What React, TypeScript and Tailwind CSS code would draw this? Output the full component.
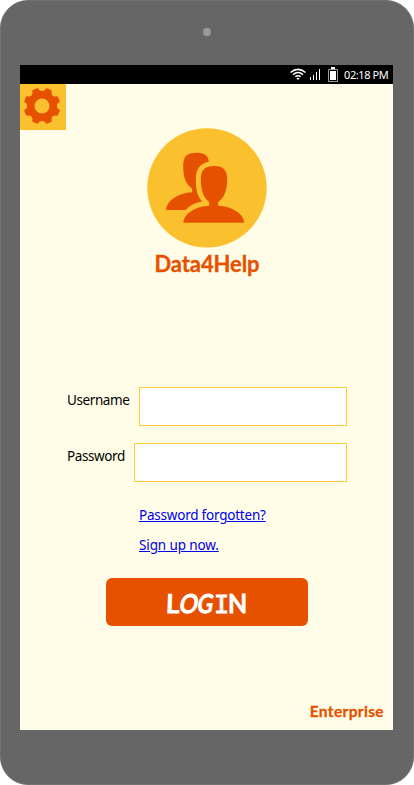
import React from "react";

const UI_FONT = "font-['Noto_Sans','Open_Sans',sans-serif]";

function StatusBar() {
  return (
    <div className="flex h-[19px] shrink-0 items-center bg-black pr-[4px]">
      <svg className="ml-auto h-[19px] w-[50px]" viewBox="0 0 50 19" fill="none" stroke="#fff">
        <path d="M1.500 7.500Q9 1.200 16.500 7.500M4 9.600Q9 5.500 14 9.600M6.300 11.700Q9 9.700 11.700 11.700" strokeWidth="1.5" />
        <path d="M7.300 13.300Q9 12 10.700 13.300L9 15Z" fill="#fff" stroke="none" />
        <path d="M21.500 12v3M24.500 10v5M27.500 7v8M30.500 4v11" strokeWidth="1" />
        <path d="M39.500 4.500h9v12h-9z" stroke="#a0a0a0" strokeWidth="1" />
        <path d="M42 2h4v2h-4zM41 6h6v9h-6z" fill="#fff" stroke="none" />
      </svg>
      <span className={`${UI_FONT} ml-[5px] w-[45px] whitespace-nowrap text-[11px] leading-[19px] tracking-[-0.4px] text-white`}>
        02:18 PM
      </span>
    </div>
  );
}

function SettingsButton() {
  return (
    <button aria-label="Settings" className="block size-[46px] bg-[#fbc02d]">
      <svg className="size-[46px]" viewBox="-22 -22 46 46">
        <circle r="18.3" fill="#e65100" />
        <g fill="#fbc02d">
          <circle r="7.5" />
          <circle cx="0" cy="-19" r="4" />
          <circle cx="0" cy="19" r="4" />
          <circle cx="-19" cy="0" r="4" />
          <circle cx="19" cy="0" r="4" />
          <circle cx="-13.5" cy="-13.5" r="4" />
          <circle cx="13.5" cy="-13.5" r="4" />
          <circle cx="-13.5" cy="13.5" r="4" />
          <circle cx="13.5" cy="13.5" r="4" />
        </g>
      </svg>
    </button>
  );
}

function Logo() {
  return (
    <svg className="h-[120px] w-[120px]" viewBox="22 24 360 360">
      <circle cx="202" cy="203.500" r="179" fill="#fbc02d" />
      <g fill="#e65100" transform="translate(1.5 0)">
        <path d="M168 98C192 98 204 105 206 125C180 130 167 145 167 180C167 210 172 230 186 244C165 249 148 257 136 270H78C78 245 112 219 156 217V206C138 193 129 175 129 138C129 109 140 98 168 98Z" />
        <path d="M222 138C250 138 261 150 261 178C261 215 250 235 234 246V257C278 259 312 283 312 308H130C130 283 163 259 207 257V246C192 235 182 215 182 178C182 150 194 138 222 138Z" />
      </g>
    </svg>
  );
}

function Field({ label, id, gap, type }: { label: string; id: string; gap: string; type: string }) {
  return (
    <div className="flex h-[39px] w-[280px]">
      <label htmlFor={id} className={`${gap} shrink-0 whitespace-nowrap pt-[3px] leading-5 tracking-[-0.4px]`}>
        {label}
      </label>
      <input id={id} type={type} className="h-[39px] min-w-0 flex-1 border border-[#ffcc33] bg-white px-2 outline-none" />
    </div>
  );
}

export default function App() {
  return (
    <div className="h-[785px] w-[414px] bg-white">
      <div className="flex h-[785px] w-[414px] flex-col rounded-[28px] border border-[#727272] bg-[#666] pl-[19px] pr-[20px]">
        <div className="flex h-[64px] shrink-0 justify-center pt-[27px]">
          <div className="size-[8px] rounded-full bg-[#999]" />
        </div>
        <main className="flex h-[665px] w-[373px] flex-col bg-[#fffde7]">
          <StatusBar />
          <div className="h-[44px]">
            <SettingsButton />
          </div>
          <div className="flex flex-col items-center">
            <Logo />
            <h1 className="font-['Lato',sans-serif] h-[30px] whitespace-nowrap pl-px pt-px text-[22px] font-bold leading-[30px] tracking-[-0.1px] text-[#e65100] [-webkit-text-stroke:0.3px_#e65100]">
              Data4Help
            </h1>
          </div>
          <form className={`${UI_FONT} mt-[109px] flex flex-col pl-[47px] text-[13.500px] text-black`}>
            <Field label="Username" id="username" gap="w-[72px]" type="text" />
            <div className="h-[17px]" />
            <Field label="Password" id="password" gap="w-[67px]" type="password" />
            <div className="ml-[72px] mt-[23px] flex flex-col items-start gap-[10px] leading-5 text-[#0000ee]">
              <a href="#forgot" className="whitespace-nowrap tracking-[-0.22px] underline">Password forgotten?</a>
              <a href="#signup" className="whitespace-nowrap tracking-[-0.12px] underline">Sign up now.</a>
            </div>
            <button type="button" className="ml-[39px] mt-[23px] flex h-[48px] w-[202px] items-center justify-center rounded-[6px] bg-[#e65100] pt-[2px] font-['Lato',sans-serif] text-[26px] font-semibold leading-none text-white [-webkit-text-stroke:1px_white] [stroke-linejoin:round]">
              <span className="flex w-[82px] items-baseline">
                <span className="w-[13px] -skew-x-2">L</span>
                <span className="w-[19px] origin-center -skew-x-12 scale-x-[.88]">O</span>
                <span className="w-[16px] origin-left -skew-x-12 scale-x-[.82]">G</span>
                <span className="w-[14px] font-['DejaVu_Sans_Mono',monospace] text-[25px] font-normal">I</span>
                <span className="w-[20px] origin-left scale-x-[.96]">N</span>
              </span>
            </button>
          </form>
          <div className="mt-[74px] pr-[9px] text-right font-['Lato',sans-serif] text-[15.500px] font-bold leading-[22px] tracking-[0.35px] text-[#e65100] [-webkit-text-stroke:0.3px_#e65100]">
            Enterprise
          </div>
        </main>
      </div>
    </div>
  );
}
